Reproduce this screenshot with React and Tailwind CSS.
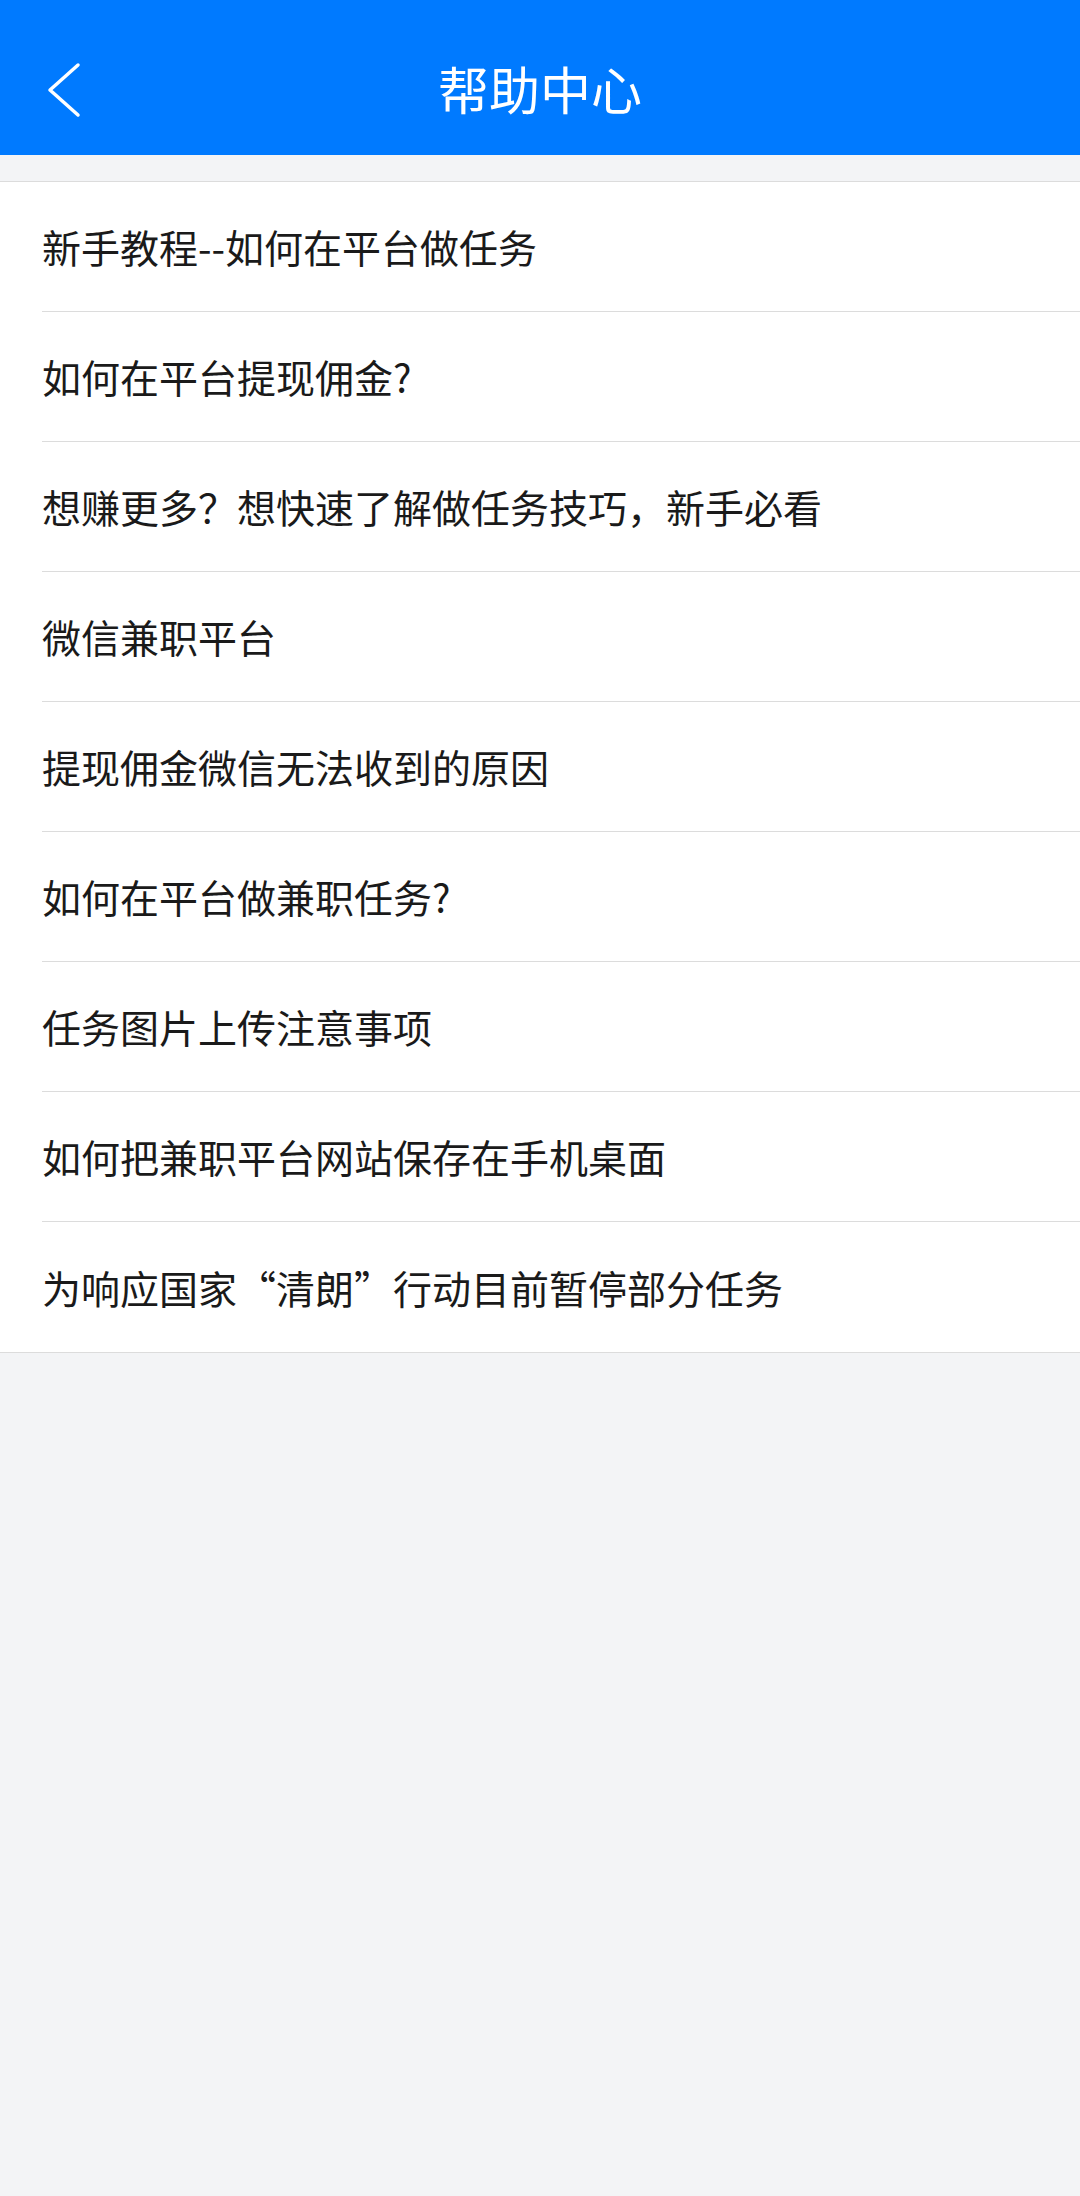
const items = [
  "新手教程--如何在平台做任务",
  "如何在平台提现佣金?",
  "想赚更多？想快速了解做任务技巧，新手必看",
  "微信兼职平台",
  "提现佣金微信无法收到的原因",
  "如何在平台做兼职任务?",
  "任务图片上传注意事项",
  "如何把兼职平台网站保存在手机桌面",
  "为响应国家“清朗”行动目前暂停部分任务",
];

function App() {
  return (
    <div
      className="min-h-[2196px] bg-[#f3f4f6]"
      style={{ fontFamily: '"Noto Sans CJK SC", "Noto Sans", sans-serif' }}
    >
      {/* 顶部导航 */}
      <header className="relative h-[155px] bg-[#007aff] pt-[22px] flex items-center justify-center">
        <button className="absolute left-[33px] top-[52px] p-2">
          <svg width="44" height="60" viewBox="0 0 44 60" fill="none">
            <polyline
              points="37,5 9,30 37,55"
              stroke="#fff"
              strokeWidth="3.5"
              strokeLinecap="round"
              strokeLinejoin="round"
            />
          </svg>
        </button>
        <h1 className="text-white text-[51px] leading-none">帮助中心</h1>
      </header>

      {/* 列表 */}
      <ul className="mt-[26px] bg-white border-y border-[#dcdcdc]">
        {items.map((text, i) => (
          <li key={i} className="pl-[42px]">
            <div
              className={`h-[130px] flex items-center text-[39px] text-[#1a1a1a] ${
                i < items.length - 1 ? "border-b border-[#dcdcdc]" : ""
              }`}
            >
              <span>{text}</span>
            </div>
          </li>
        ))}
      </ul>
    </div>
  );
}

export default App;
